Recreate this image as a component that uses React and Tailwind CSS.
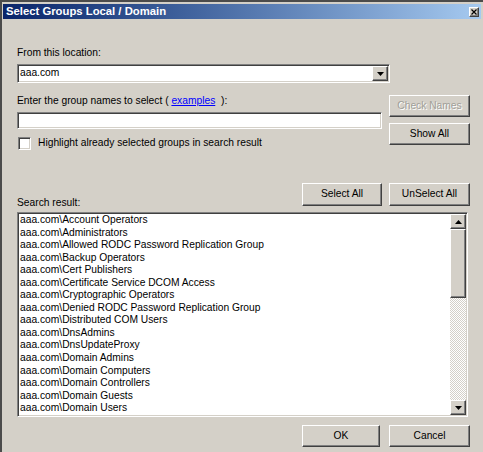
import React from 'react';

const raised = "border border-t-white border-l-white border-r-[#404040] border-b-[#404040] shadow-[inset_-1px_-1px_#808080] bg-[#d4d0c8]";
const sunken = "border border-t-[#808080] border-l-[#808080] border-r-white border-b-white shadow-[inset_1px_1px_#404040,inset_-1px_-1px_#d4d0c8]";

const groups = [
    'Account Operators',
    'Administrators',
    'Allowed RODC Password Replication Group',
    'Backup Operators',
    'Cert Publishers',
    'Certificate Service DCOM Access',
    'Cryptographic Operators',
    'Denied RODC Password Replication Group',
    'Distributed COM Users',
    'DnsAdmins',
    'DnsUpdateProxy',
    'Domain Admins',
    'Domain Computers',
    'Domain Controllers',
    'Domain Guests',
    'Domain Users',
];

const Arrow = ({ up }) => (
    <svg width="7" height="4" viewBox="0 0 7 4" className={up ? '' : 'rotate-180'}>
        <path d="M3.5 0 L7 4 L0 4 Z" fill="#000" />
    </svg>
);

const Button = ({ children, className = '', disabled }) => (
    <button
        className={`${raised} h-[22px] flex items-center justify-center leading-none ${disabled ? 'text-[#a19f98] [text-shadow:1px_1px_0_#fff]' : 'text-black'} ${className}`}
    >
        {children}
    </button>
);

const App = () => {
    return (
        <div className="w-[483px] h-[452px] overflow-hidden bg-[#4b4b4b] pt-[2px] pl-[2px] font-['Liberation_Sans',Arial,sans-serif] text-[10.25px] text-black">
            <div className="h-full bg-[#d4d0c8] pt-[2px]">
                {/* title bar */}
                <div className="ml-[1px] mr-[2px] h-[15px] bg-gradient-to-r from-[#0a246a] to-[#a6caf0] flex items-center justify-between pl-[3px] pr-[2px]">
                    <span className="text-white font-bold text-[11.3px] leading-none">Select Groups Local / Domain</span>
                    <span className={`${raised} w-[10px] h-[10px] flex items-center justify-center`}>
                        <svg width="6" height="6" viewBox="0 0 6 6">
                            <path d="M0.5 0.5 L5.5 5.5 M5.5 0.5 L0.5 5.5" stroke="#000" strokeWidth="1.2" />
                        </svg>
                    </span>
                </div>

                <div className="pl-[15px] pr-[13px]">
                    <div className="mt-[28px] leading-[12px]">From this location:</div>
                    <div className={`${sunken} mt-[5px] w-[373px] h-[19px] bg-white flex items-center pl-[2px] pr-[1px]`}>
                        <span className="flex-1 leading-none">aaa.com</span>
                        <span className={`${raised} w-[16px] h-[15px] flex items-center justify-center`}>
                            <Arrow />
                        </span>
                    </div>

                    <div className="mt-[12px] flex justify-between">
                        <div className="w-[365px]">
                            <div className="leading-[12px] whitespace-pre">
                                Enter the group names to select ( <span className="text-[#0000ff] underline">examples</span>  ):
                            </div>
                            <div className={`${sunken} mt-[5px] h-[17px] bg-white`} />
                            <div className="mt-[8px] flex items-center gap-[7px]">
                                <span className={`${sunken} ml-[1px] w-[13px] h-[13px] bg-white`} />
                                <span className="leading-none">Highlight already selected groups in search result</span>
                            </div>
                        </div>
                        <div className="flex flex-col gap-[6px]">
                            <Button disabled className="w-[81px]">Check Names</Button>
                            <Button className="w-[81px]">Show All</Button>
                        </div>
                    </div>

                    <div className="mt-[33px] flex items-end gap-[7px]">
                        <div className="flex-1 leading-[12px] mb-[-3px]">Search result:</div>
                        <Button className="w-[80px] h-[23px]">Select All</Button>
                        <Button className="w-[81px] h-[23px]">UnSelect All</Button>
                    </div>

                    <div className={`${sunken} mt-[6px] w-[451px] h-[205px] bg-white flex p-[1px]`}>
                        <div className="flex-1 overflow-hidden pl-[1px]">
                            {groups.map((g) => (
                                <div key={g} className="leading-[12.55px] whitespace-nowrap">aaa.com\{g}</div>
                            ))}
                        </div>
                        <div className="w-[16px] flex flex-col">
                            <span className={`${raised} h-[15px] flex items-center justify-center`}>
                                <Arrow up />
                            </span>
                            <span className={`${raised} h-[69px]`} />
                            <span className="flex-1 bg-[repeating-conic-gradient(#ffffff_0%_25%,#d4d0c8_0%_50%)] bg-[length:2px_2px]" />
                            <span className={`${raised} h-[15px] flex items-center justify-center`}>
                                <Arrow />
                            </span>
                        </div>
                    </div>

                    <div className="mt-[8px] flex justify-end gap-[9px]">
                        <Button className="w-[78px]">OK</Button>
                        <Button className="w-[81px]">Cancel</Button>
                    </div>
                </div>
            </div>
        </div>
    );
};

export default App;
